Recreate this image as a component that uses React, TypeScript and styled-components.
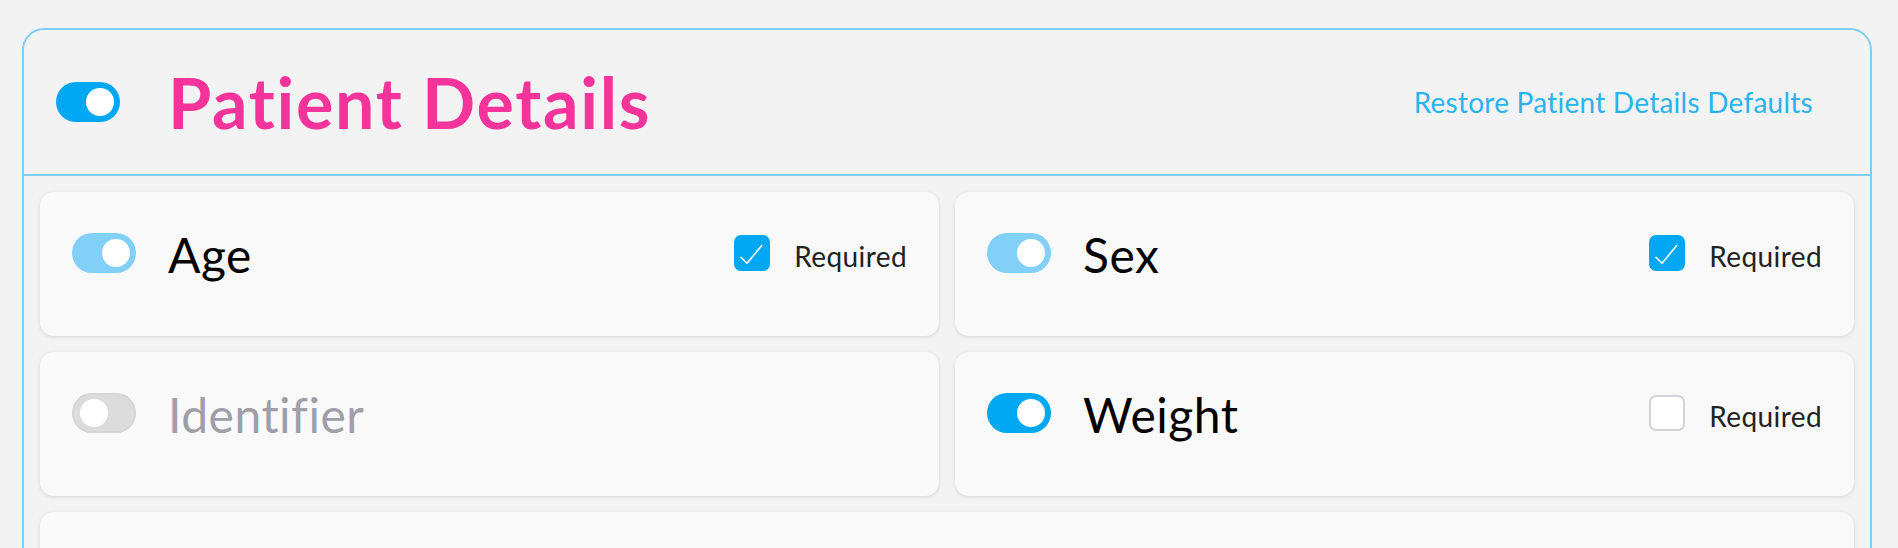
import React from "react";
import styled, { createGlobalStyle, css } from "styled-components";

const GlobalStyle = createGlobalStyle`
  html, body {
    margin: 0;
    padding: 0;
    background: #f3f3f3;
    font-family: "Lato", "Noto Sans", sans-serif;
  }
  * { box-sizing: border-box; }
`;

const Page = styled.div`
  padding: 28px 26px 0 22px;
  height: 548px;
  overflow: hidden;
`;

const Panel = styled.section`
  border: 2px solid #7fcff5;
  border-radius: 22px;
  background: #f3f3f3;
`;

const Header = styled.header`
  height: 146px;
  display: flex;
  align-items: center;
  padding: 0 57px 0 32px;
  border-bottom: 2px solid #7fcff5;
`;

const Title = styled.h1`
  margin: 0 0 0 48px;
  font-size: 70px;
  line-height: 1;
  font-weight: 700;
  letter-spacing: 1.7px;
  color: #f5349b;
  flex: 1;
`;

const RestoreLink = styled.a`
  font-size: 28px;
  letter-spacing: 0.25px;
  color: #2ab4ef;
  text-decoration: none;
  cursor: pointer;
`;

const Body = styled.div`
  padding: 16px;
  display: grid;
  grid-template-columns: 1fr 1fr;
  gap: 16px;
`;

const Card = styled.div<{ $wide?: boolean }>`
  background: #f9f9f9;
  border-radius: 14px;
  box-shadow: 0 1px 4px rgba(0, 0, 0, 0.12);
  padding: 32px;
  min-height: 144px;
  ${(p) =>
    p.$wide &&
    css`
      grid-column: 1 / -1;
    `}
`;

const Row = styled.div`
  display: flex;
  align-items: center;
  height: 58px;
`;

type ToggleState = "on" | "muted" | "off";

const trackColors: Record<ToggleState, string> = {
  on: "#00a8f3",
  muted: "#82d0f8",
  off: "#dcdcdc",
};

const Track = styled.span<{ $state: ToggleState }>`
  flex: none;
  width: 64px;
  height: 40px;
  border-radius: 20px;
  display: flex;
  align-items: center;
  background: ${(p) => trackColors[p.$state]};
  justify-content: ${(p) => (p.$state === "off" ? "flex-start" : "flex-end")};
  padding: ${(p) => (p.$state === "off" ? "0 0 0 8px" : "0 6px 0 0")};
  ${(p) =>
    p.$state === "off" &&
    css`
      box-shadow: inset 0 0 0 2px #d6d6d8;
    `}
`;

const Knob = styled.span`
  width: 28px;
  height: 28px;
  border-radius: 50%;
  background: #ffffff;
`;

const Label = styled.span<{ $disabled?: boolean }>`
  margin-left: 32px;
  padding-top: 4px;
  font-size: 48px;
  line-height: 54px;
  letter-spacing: 0.5px;
  color: ${(p) => (p.$disabled ? "#a09fa8" : "#000000")};
  flex: 1;
`;

const CheckBox = styled.span<{ $checked: boolean }>`
  flex: none;
  width: 36px;
  height: 36px;
  border-radius: 7px;
  display: flex;
  align-items: center;
  justify-content: center;
  background: ${(p) => (p.$checked ? "#00a8f3" : "#ffffff")};
  border: ${(p) => (p.$checked ? "none" : "2px solid #d3d3d8")};
`;

const RequiredText = styled.span`
  margin-left: 24px;
  padding-top: 6px;
  font-size: 28px;
  letter-spacing: 0.4px;
  color: #222222;
`;

const Toggle = ({ state }: { state: ToggleState }) => (
  <Track $state={state}>
    <Knob />
  </Track>
);

const Check = ({ checked }: { checked: boolean }) => (
  <CheckBox $checked={checked}>
    {checked && (
      <svg width="36" height="36" viewBox="0 0 36 36">
        <path
          d="M7 22.3 L13 28.3 L27.7 10.6"
          fill="none"
          stroke="#ffffff"
          strokeWidth="1.6"
          strokeLinecap="round"
          strokeLinejoin="round"
        />
      </svg>
    )}
  </CheckBox>
);

type Field = {
  name: string;
  toggle: ToggleState;
  required?: boolean;
};

const fields: Field[] = [
  { name: "Age", toggle: "muted", required: true },
  { name: "Sex", toggle: "muted", required: true },
  { name: "Identifier", toggle: "off" },
  { name: "Weight", toggle: "on", required: false },
];

export default function App() {
  return (
    <>
      <GlobalStyle />
      <Page>
        <Panel>
          <Header>
            <Toggle state="on" />
            <Title>Patient Details</Title>
            <RestoreLink>Restore Patient Details Defaults</RestoreLink>
          </Header>
          <Body>
            {fields.map((f) => (
              <Card key={f.name}>
                <Row>
                  <Toggle state={f.toggle} />
                  <Label $disabled={f.toggle === "off"}>{f.name}</Label>
                  {f.required !== undefined && (
                    <>
                      <Check checked={f.required} />
                      <RequiredText>Required</RequiredText>
                    </>
                  )}
                </Row>
              </Card>
            ))}
            <Card $wide />
          </Body>
        </Panel>
      </Page>
    </>
  );
}
